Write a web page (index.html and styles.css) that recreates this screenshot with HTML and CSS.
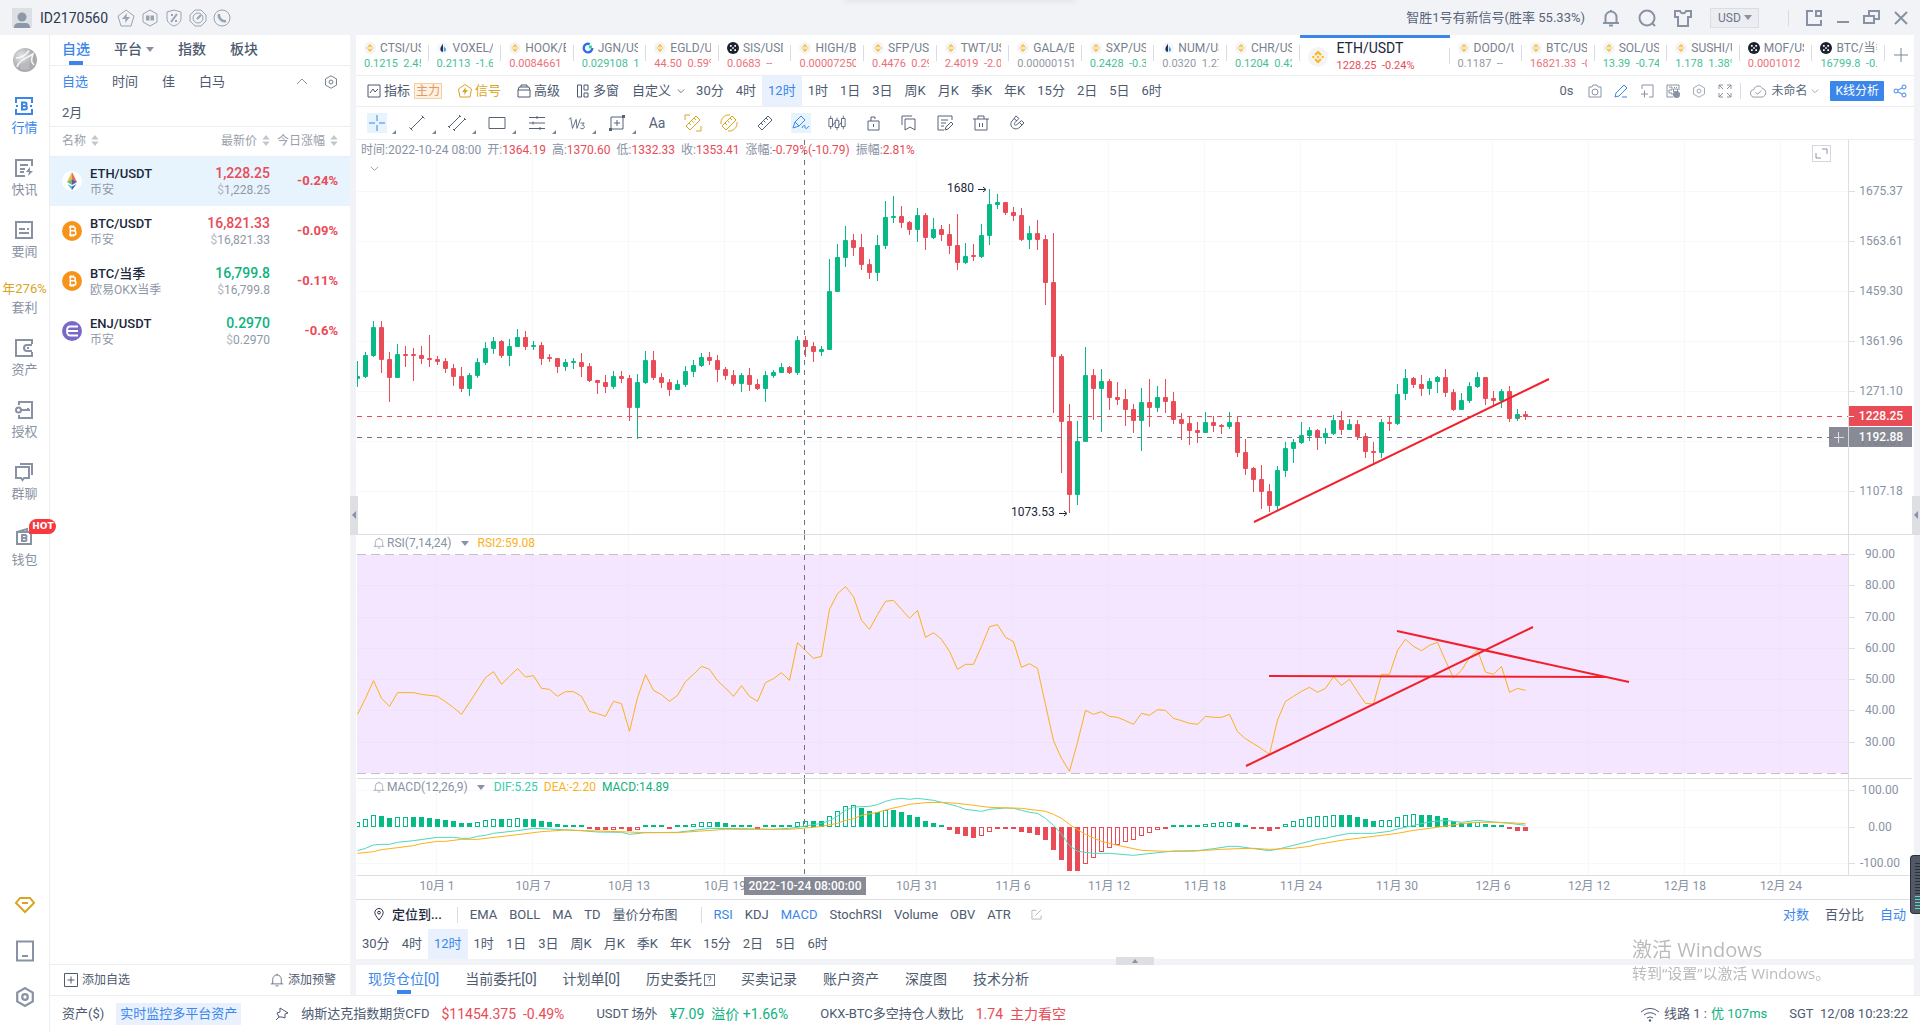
FILE: index.html
```html
<!DOCTYPE html>
<html lang="zh-CN">
<head>
<meta charset="utf-8">
<title>ETH/USDT 行情</title>
<link rel="stylesheet" href="styles.css">
</head>
<body>
<svg class="sprite" aria-hidden="true">
  <symbol id="bell" viewBox="0 0 18 18"><path d="M1 14h16M3.500 14V8a5.500 5.500 0 0 1 11 0v6M7 16.500h4M9 1v2"/></symbol>
  <symbol id="caret" viewBox="0 0 8 5"><path d="M0 0h8L4 5z" fill="currentColor" stroke="none"/></symbol>
  <symbol id="down" viewBox="0 0 10 6"><path d="M1 .5l4 4 4-4"/></symbol>
  <symbol id="sort" viewBox="0 0 8 12"><path d="M4 0l4 5H0zM4 12l4-5H0z" fill="#c3c6cc" stroke="none"/></symbol>
  <symbol id="hex" viewBox="0 0 18 18"><path d="M9 1l7 4v8l-7 4-7-4V5z"/><circle cx="9" cy="9" r="2.500"/></symbol>
  <symbol id="bnb" viewBox="0 0 14 14"><circle cx="7" cy="7" r="7" fill="#f3f4f6" stroke="none"/><path d="M7 2.500l2.600 2.600-1.100 1L7 4.600 5.500 6.100l-1.100-1zM7 11.500L4.400 8.900l1.100-1L7 9.400l1.500-1.500 1.100 1zM2.700 7l1-1 1 1-1 1zM9.300 7l1-1 1 1-1 1zM6 7l1-1 1 1-1 1z" fill="#fdb515" stroke="none"/></symbol>
  <symbol id="drop" viewBox="0 0 14 14"><circle cx="7" cy="7" r="7" fill="#f6f7f9" stroke="none"/><path d="M7 2C4 6 4 7 4 8.500a3 3 0 0 0 3 3z" fill="#1d3350" stroke="none"/><path d="M8 5c2 2 2.500 3 2.500 4A2.500 2.500 0 0 1 8 11.500z" fill="#4a9df0" stroke="none"/></symbol>
  <symbol id="gate" viewBox="0 0 14 14"><path d="M9 2.500A5 5 0 1 0 12 7" stroke="#2d6fe8" stroke-width="2.800"/><path d="M8 4h3.500v3.500H8z" fill="#2ed6a5" stroke="none"/></symbol>
  <symbol id="okx" viewBox="0 0 14 14"><circle cx="7" cy="7" r="7" fill="#1c2230" stroke="none"/><path d="M3.500 3.500h2v2h-2zM8.500 3.500h2v2h-2zM6 6h2v2H6zM3.500 8.500h2v2h-2zM8.500 8.500h2v2h-2z" fill="#fff" stroke="none"/></symbol>
  <symbol id="btc" viewBox="0 0 20 20"><circle cx="10" cy="10" r="10" fill="#f7931a" stroke="none"/><path d="M7 6h4.300c2.700 0 2.700 3.800 0 3.800H8.200h3.500c2.900 0 2.900 4.200 0 4.200H7M8.300 6v8M9 4.200V6M11.300 4.200V6M9 14v1.800M11.300 14v1.800" stroke="#fff" stroke-width="1.500"/></symbol>
  <symbol id="ruler" viewBox="0 0 18 18"><path d="M2 12L12 2l4 4L6 16zM5 9l2 2M7.500 6.500l2 2M10 4l2 2"/></symbol>
</svg>

<div class="app">
<header class="titlebar">
  <svg class="avatar" viewBox="0 0 20 20"><path d="M0 0h20v20H0z" fill="#dcdfe4"/><circle cx="10" cy="9" r="4.500" fill="#8c97a8"/><path d="M2 20c0-4 2-5 5-5h6c3 0 5 1 5 5z" fill="#8c97a8"/></svg>
  <span class="user-id">ID2170560</span>
  <nav class="badges" aria-label="功能">
    <svg viewBox="0 0 18 18"><path d="M9 1l8 6-3 10H4L1 7z"/><path d="M10 4L5 10h3.500L8 14l5-6H9.500z" fill="currentColor" stroke="none"/></svg>
    <svg viewBox="0 0 18 18"><path d="M9 1l7 4v8l-7 4-7-4V5z"/><path d="M5 6.500h3.500v5H5zM9.500 6.500H13v5H9.500z" fill="currentColor" stroke="none"/></svg>
    <svg viewBox="0 0 18 18"><path d="M9 1l7 2v6c0 5-4 7-7 8-3-1-7-3-7-8V3z"/><path d="M12 5l-6 8M6 6h2M10 12h2" stroke-width="2"/></svg>
    <svg viewBox="0 0 18 18"><path d="M6 1h6l5 5v6l-5 5H6l-5-5V6z"/><circle cx="9" cy="9" r="5"/><path d="M8 10l4-4" stroke-width="2"/></svg>
    <svg viewBox="0 0 18 18"><circle cx="9" cy="9" r="8"/><path d="M6 5c-1 4 3 8 7 7" stroke-width="2.500"/></svg>
  </nav>
  <span class="signal-note">智胜1号有新信号(胜率 55.33%)</span>
  <button class="icon-btn" aria-label="通知"><svg class="i18 bold"><use href="#bell"/></svg></button>
  <button class="icon-btn" aria-label="搜索"><svg class="i18 bold" viewBox="0 0 18 18"><circle cx="9" cy="9" r="7.500"/><path d="M14 14l3 3"/></svg></button>
  <button class="icon-btn" aria-label="主题"><svg class="i18 bold" viewBox="0 0 18 18"><path d="M1 2h5c1 3 5 3 6 0h5v6h-3v9H4V8H1z"/></svg></button>
  <label class="currency"><select aria-label="货币"><option>USD</option></select><svg><use href="#caret"/></svg></label>
  <i class="vsep"></i>
  <button class="icon-btn win" aria-label="布局"><svg class="i18 bold" viewBox="0 0 18 18"><path d="M8 2H2v14h14v-5M11 2h5v5h-5z"/></svg></button>
  <button class="icon-btn win" aria-label="最小化"><svg class="i18 bold" viewBox="0 0 18 18"><path d="M3 13h12"/></svg></button>
  <button class="icon-btn win" aria-label="还原"><svg class="i18 bold" viewBox="0 0 18 18"><path d="M1 7h10v7H1zM6 7V2h10v8h-5"/></svg></button>
  <button class="icon-btn win" aria-label="关闭"><svg class="i18 bold" viewBox="0 0 18 18"><path d="M3 3l12 12M15 3L3 15"/></svg></button>
  <i class="top-shade"></i>
</header>

<nav class="rail" aria-label="主导航">
  <svg class="logo" viewBox="0 0 24 24"><defs><radialGradient id="ball" cx=".35" cy=".35"><stop offset="0" stop-color="#e6e6e6"/><stop offset="1" stop-color="#a9abae"/></radialGradient></defs><circle cx="12" cy="12" r="12" fill="url(#ball)"/><path d="M3 10C9 10 13 7 16 2.500M4 19c2-7 8-8 16-13-2 6-2 8 1 11" stroke="#f7f7f7" stroke-width="1.500" fill="none"/><path d="M7 21c1-5 5-7 10-8-1 4-1 6 0 8-3 1-7 1-10 0z" fill="#b9bbbe"/></svg>
  <a class="rail-item on" href="#"><svg class="i18 bold" viewBox="0 0 18 18"><path d="M1 6V1h16v5M1 12v5h16v-5M1 9h2M15 9h2M7 5.500h3c2 0 2 3.500 0 3.500H7h3c2.500 0 2.500 3.500 0 3.500H7z"/></svg>行情</a>
  <a class="rail-item" href="#"><svg class="i18 bold" viewBox="0 0 18 18"><path d="M17 7V1H1v16h9M5 6h8M5 10h5M5 13h4"/><path d="M15 8l-4 5h3l-1 4 5-5h-3z" fill="currentColor" stroke="none"/></svg>快讯</a>
  <a class="rail-item" href="#"><svg class="i18 bold" viewBox="0 0 18 18"><path d="M1 1h16v16H1zM4 8h6M12 8h2M4 12h10"/></svg>要闻</a>
  <a class="rail-item" href="#"><b class="rate">年276%</b>套利</a>
  <a class="rail-item" href="#"><svg class="i18 bold" viewBox="0 0 18 18"><path d="M17 5V1H1v16h16v-4M17 6h-5a3 3 0 0 0 0 6h5M12 9h2"/></svg>资产</a>
  <a class="rail-item" href="#"><svg class="i18 bold" viewBox="0 0 18 18"><path d="M4 4V1h13v16H4v-3M6 9h9M13 7v2"/><circle cx="3.500" cy="9" r="2.500"/></svg>授权</a>
  <a class="rail-item" href="#"><svg class="i18 bold" viewBox="0 0 18 18"><path d="M5 1h12v11M1 4h13v11H9l-1.500 2L6 15H1z"/></svg>群聊</a>
  <a class="rail-item hot" href="#"><svg class="i18 bold" viewBox="0 0 18 18"><path d="M2 5h14v12H2zM2 5l10-3v3M7 8h3c2 0 2 3 0 3H7h3c2 0 2 3 0 3H7z"/></svg>钱包<em>HOT</em></a>
  <div class="rail-foot">
    <a href="#" class="gold" aria-label="会员"><svg class="i20" viewBox="0 0 20 20"><path d="M5 3h10l4 5-9 9-9-9zM7 8h6"/></svg></a>
    <a href="#" aria-label="设备"><svg class="i20" viewBox="0 0 20 20"><path d="M2 0.500h16v19H2zM7 15h6"/></svg></a>
    <a href="#" aria-label="设置"><svg class="i20"><use href="#hex"/></svg></a>
  </div>
</nav>

<aside class="watch">
  <nav class="watch-tabs"><a class="on" href="#">自选</a><a href="#">平台 <svg class="car"><use href="#caret"/></svg></a><a href="#">指数</a><a href="#">板块</a></nav>
  <div class="watch-groups">
    <nav><a class="on" href="#">自选</a><a href="#">时间</a><a href="#">佳</a><a href="#">白马</a><svg class="chev" viewBox="0 0 12 7"><path d="M1 6l5-5 5 5"/></svg><svg class="i14"><use href="#hex"/></svg></nav>
    <a href="#">2月</a>
  </div>
  <table class="quotes">
    <thead><tr><th>名称 <svg><use href="#sort"/></svg></th><th>最新价 <svg><use href="#sort"/></svg></th><th>今日涨幅 <svg><use href="#sort"/></svg></th></tr></thead>
    <tbody>
      <tr class="on"><td><div class="coin"><svg viewBox="0 0 20 20"><circle cx="10" cy="10" r="10" fill="#fff"/><path d="M10 1v7l-5 3z" fill="#f5b553"/><path d="M10 1v7l5 3z" fill="#e8705a"/><path d="M5 11l5-3v6z" fill="#6bbf6a"/><path d="M15 11l-5-3v6z" fill="#6657a8"/><path d="M5.500 13L10 15.500V19z" fill="#4bb3e8"/><path d="M14.500 13L10 15.500V19z" fill="#3468c0"/></svg><span><b>ETH/USDT</b><small>币安</small></span></div></td><td><b class="down">1,228.25</b><small><i>$</i>1,228.25</small></td><td class="down">-0.24%</td></tr>
      <tr><td><div class="coin"><svg><use href="#btc"/></svg><span><b>BTC/USDT</b><small>币安</small></span></div></td><td><b class="down">16,821.33</b><small><i>$</i>16,821.33</small></td><td class="down">-0.09%</td></tr>
      <tr><td><div class="coin"><svg><use href="#btc"/></svg><span><b>BTC/当季</b><small>欧易OKX当季</small></span></div></td><td><b class="up">16,799.8</b><small><i>$</i>16,799.8</small></td><td class="down">-0.11%</td></tr>
      <tr><td><div class="coin"><svg viewBox="0 0 20 20"><circle cx="10" cy="10" r="10" fill="#7a6ac8"/><path d="M16 5.500H8C5 5.500 5 8 5 10s0 4.500 3 4.500h8M5 10h11" stroke="#fff" stroke-width="1.800" fill="none"/></svg><span><b>ENJ/USDT</b><small>币安</small></span></div></td><td><b class="up">0.2970</b><small><i>$</i>0.2970</small></td><td class="down">-0.6%</td></tr>
    </tbody>
  </table>
  <footer><button><svg class="i14" viewBox="0 0 14 14"><path d="M.5.5h13v13H.5zM3.500 7h7M7 3.500v7"/></svg>添加自选</button><button><svg class="i14"><use href="#bell"/></svg>添加预警</button></footer>
</aside>

<main class="main">
  <i class="handle left"></i><i class="handle right"></i>
  <nav class="tickers">
    <a href="#"><span><svg><use href="#bnb"/></svg>CTSI/USDT</span><b class="up">0.1215&nbsp; 2.45%</b></a>
    <a href="#"><span><svg><use href="#drop"/></svg>VOXEL/USDT</span><b class="up">0.2113&nbsp; -1.63%</b></a>
    <a href="#"><span><svg><use href="#bnb"/></svg>HOOK/BTC</span><b class="down">0.0084661</b></a>
    <a href="#"><span><svg><use href="#gate"/></svg>JGN/USDT</span><b class="up">0.029108&nbsp; 1%</b></a>
    <a href="#"><span><svg><use href="#bnb"/></svg>EGLD/USDT</span><b class="down">44.50&nbsp; 0.59%</b></a>
    <a href="#"><span><svg><use href="#okx"/></svg>SIS/USDT</span><b class="down">0.0683&nbsp; --</b></a>
    <a href="#"><span><svg><use href="#bnb"/></svg>HIGH/BTC</span><b class="down">0.00007250</b></a>
    <a href="#"><span><svg><use href="#bnb"/></svg>SFP/USDT</span><b class="down">0.4476&nbsp; 0.29%</b></a>
    <a href="#"><span><svg><use href="#bnb"/></svg>TWT/USDT</span><b class="down">2.4019&nbsp; -2.01%</b></a>
    <a href="#"><span><svg><use href="#bnb"/></svg>GALA/BTC</span><b>0.00000151</b></a>
    <a href="#"><span><svg><use href="#bnb"/></svg>SXP/USDT</span><b class="up">0.2428&nbsp; -0.37%</b></a>
    <a href="#"><span><svg><use href="#drop"/></svg>NUM/USDT</span><b>0.0320&nbsp; 1.27%</b></a>
    <a href="#"><span><svg><use href="#bnb"/></svg>CHR/USDT</span><b class="up">0.1204&nbsp; 0.42%</b></a>
    <a href="#" class="current"><svg><use href="#bnb"/></svg><span>ETH/USDT<b class="down">1228.25&nbsp; -0.24%</b></span></a>
    <a href="#"><span><svg><use href="#bnb"/></svg>DODO/USDT</span><b>0.1187&nbsp; --</b></a>
    <a href="#"><span><svg><use href="#bnb"/></svg>BTC/USDT</span><b class="down">16821.33&nbsp; -0.09%</b></a>
    <a href="#"><span><svg><use href="#bnb"/></svg>SOL/USDT</span><b class="up">13.39&nbsp; -0.74%</b></a>
    <a href="#"><span><svg><use href="#bnb"/></svg>SUSHI/USDT</span><b class="up">1.178&nbsp; 1.38%</b></a>
    <a href="#"><span><svg><use href="#okx"/></svg>MOF/USDT</span><b class="down">0.0001012</b></a>
    <a href="#"><span><svg><use href="#okx"/></svg>BTC/当季</span><b class="up">16799.8&nbsp; -0.11%</b></a>
    <button aria-label="添加"><svg class="i14" viewBox="0 0 14 14"><path d="M7 0v14M0 7h14"/></svg></button>
  </nav>

  <div class="toolbar">
    <button><svg class="i14" viewBox="0 0 14 14"><path d="M1 1h12v12H1zM3 9l3-4 2 3 3-3"/></svg>指标<em>主力</em></button>
    <button class="gold"><svg class="i14" viewBox="0 0 14 14"><path d="M7 .5L13.500 5 12 13H2L.5 5z"/><path d="M8 3L4 8h2.500L6 11l4-5H7.500z" fill="currentColor" stroke="none"/></svg>信号</button>
    <button><svg class="i14" viewBox="0 0 14 14"><path d="M1 6h12v7H1zM1 6l1-3h10l1 3M4 3V1h6v2"/></svg>高级</button>
    <button><svg class="i14" viewBox="0 0 14 14"><path d="M1.500 1h4v12h-4zM8 1h4v5H8zM8 9h4v4H8z"/></svg>多窗</button>
    <button>自定义<svg class="chev8"><use href="#down"/></svg></button>
    <nav class="frames"><a href="#">30分</a><a href="#">4时</a><a class="on" href="#">12时</a><a href="#">1时</a><a href="#">1日</a><a href="#">3日</a><a href="#">周K</a><a href="#">月K</a><a href="#">季K</a><a href="#">年K</a><a href="#">15分</a><a href="#">2日</a><a href="#">5日</a><a href="#">6时</a></nav>
    <div class="tool-right">
      <span>0s</span>
      <svg class="i14" viewBox="0 0 14 14"><path d="M1 3h3l1-2h4l1 2h3v10H1z"/><circle cx="7" cy="8" r="3"/></svg>
      <svg class="i14 blue" viewBox="0 0 14 14"><path d="M1 13l1-4 8-8 3 3-8 8zM8 13h5"/></svg>
      <svg class="i14" viewBox="0 0 14 14"><path d="M2 5V1h11v12H9M1 10h7M4.500 6.500v7"/></svg>
      <svg class="i14" viewBox="0 0 14 14"><path d="M13 6V1H1v12h6M3 3h3v3H3v3h3v2M8 3l1 1M11 3l-1 1M7.500 5h4v3h-4z"/><circle cx="10.500" cy="10.500" r="3.500" fill="currentColor" stroke="none"/></svg>
      <svg class="i14"><use href="#hex"/></svg>
      <svg class="i14" viewBox="0 0 14 14"><path d="M1 5V1h4M1 1l4 4M9 1h4v4M13 1L9 5M1 9v4h4M1 13l4-4M13 9v4H9M13 13L9 9"/></svg>
      <i class="vsep"></i>
      <button class="save"><svg viewBox="0 0 18 14"><path d="M5 13a4 4 0 0 1-1-8c1-5 8-5 9-1 5 0 5 8 0 9zM6 8l2 2 4-4"/></svg>未命名<svg class="chev8"><use href="#down"/></svg></button>
      <button class="primary">K线分析</button>
      <svg class="i14 blue" viewBox="0 0 14 14"><circle cx="3" cy="7" r="2"/><circle cx="11" cy="3" r="2"/><circle cx="11" cy="11" r="2"/><path d="M5 6l4-2M5 8l4 2"/></svg>
    </div>
  </div>

  <div class="draw">
    <button class="more on" aria-label="十字线"><svg viewBox="0 0 18 18"><path d="M9 1v6M9 11v6M1 9h6M11 9h6"/></svg></button>
    <button class="more" aria-label="线段"><svg viewBox="0 0 18 18"><path d="M3 15L15 3M1.500 13.500l3 3M13.500 1.500l3 3"/></svg></button>
    <button class="more" aria-label="平行线"><svg viewBox="0 0 18 18"><path d="M1 13L12 2M6 16L17 5M0 12l2 2M11 1l2 2M5 15l2 2M16 4l2 2"/></svg></button>
    <button class="more" aria-label="矩形"><svg viewBox="0 0 18 18"><path d="M1 3.500h16v11H1z"/></svg></button>
    <button class="more" aria-label="斐波那契"><svg viewBox="0 0 18 18"><path d="M1 3.500h16M1 9h16M1 14.500h16M9 2v3M5 7.500v3M12 13v3"/></svg></button>
    <button class="more" aria-label="波浪"><svg viewBox="0 0 20 18"><path d="M1 5l2-2 2 12 4-10 1 10 4-11M14 9h4l-2 2.500c3 0 3 4-.5 4l-2-1"/></svg></button>
    <button class="more" aria-label="测量"><svg viewBox="0 0 18 18"><path d="M3 3h12v12H3zM9 6v6M6 9h6"/><path d="M1 14h3v3H1zM14 1h3v3h-3z" fill="currentColor" stroke="none"/></svg></button>
    <button class="txt">Aa</button>
    <button class="gold" aria-label="区间统计"><svg viewBox="0 0 18 18"><use href="#ruler" width="18" height="18"/><path d="M1 6V1h5M17 12v5h-5"/></svg></button>
    <button class="gold" aria-label="周期统计"><svg viewBox="0 0 18 18"><use href="#ruler" width="18" height="18"/><path d="M1 10a8 8 0 0 1 9-9M17 8a8 8 0 0 1-9 9"/></svg></button>
    <button aria-label="尺子"><svg viewBox="0 0 18 18"><use href="#ruler" width="18" height="18"/></svg></button>
    <button class="on" aria-label="画笔"><svg viewBox="0 0 18 18"><path d="M1 14L3 8 9 2l4 4-6 6zM3 8l4 4M10 14c2-4 3-3 3-1s2 2 4-1"/></svg></button>
    <button aria-label="K线"><svg viewBox="0 0 20 18"><path d="M1 4h4v9H1zM8 6h4v8H8zM15 4h4v9h-4zM3 1v3M3 13v3M10 3v3M10 14v3M17 1v3M17 13v3M5 12l3-4M12 12l3-4"/></svg></button>
    <button aria-label="锁定"><svg viewBox="0 0 18 18"><path d="M4 7h11v9H4zM7 7V3h4v2M9.500 10v3"/></svg></button>
    <button aria-label="收藏"><svg viewBox="0 0 18 18"><path d="M2 11V2h10M5 5h10v11l-5-3-5 3z"/></svg></button>
    <button aria-label="笔记"><svg viewBox="0 0 18 18"><path d="M16 6V2H2v14h6M5 6h7M5 9h5M5 12h3M9 16l1-3 5-5 2 2-5 5z"/></svg></button>
    <button aria-label="删除"><svg viewBox="0 0 18 18"><path d="M1 5h16M3 5v11h12V5M6 5V2h6v3M7.500 9v4M10.500 9v4"/></svg></button>
    <button aria-label="磁铁"><svg viewBox="0 0 18 18"><path d="M8 2L4 7c-4 5 3 11 8 6l4-4-2.500-2.500-4.500 4c-2 1.500-3.500 0-2-2l4-4zM6 4.500L9 7M11.500 8.500l2.500 2.500"/></svg></button>
  </div>

  <section class="chart">
    <div class="pane price">
      <svg class="plot" id="price"></svg><svg class="axis" id="price-axis"></svg>
      <div class="legend"><span>时间:2022-10-24 08:00</span><span>开:<b class="down">1364.19</b></span><span>高:<b class="down">1370.60</b></span><span>低:<b class="down">1332.33</b></span><span>收:<b class="down">1353.41</b></span><span>涨幅:<b class="down">-0.79%(-10.79)</b></span><span>振幅:<b class="down">2.81%</b></span></div>
      <svg class="fold"><use href="#down"/></svg>
      <button class="expand" aria-label="展开"><svg viewBox="0 0 17 15"><path d="M9 3h5v5M3 7v5h5"/></svg></button>
    </div>
    <div class="pane rsi">
      <svg class="plot" id="rsi"></svg><svg class="axis" id="rsi-axis"></svg>
      <div class="legend sub"><svg><use href="#bell"/></svg>RSI(7,14,24)<svg class="car"><use href="#caret"/></svg><b class="amber">RSI2:59.08</b></div>
    </div>
    <div class="pane macd">
      <svg class="plot" id="macd"></svg><svg class="axis" id="macd-axis"></svg>
      <div class="legend sub"><svg><use href="#bell"/></svg>MACD(12,26,9)<svg class="car"><use href="#caret"/></svg><b class="teal">DIF:5.25</b><b class="amber">DEA:-2.20</b><b class="up">MACD:14.89</b></div>
    </div>
    <svg class="dates" id="dates"></svg>
  </section>

  <div class="indicators">
    <button class="locate"><svg viewBox="0 0 10 14"><path d="M5 13C2 9 .5 7 .5 5a4.500 4.500 0 0 1 9 0c0 2-1.500 4-4.500 8z"/><circle cx="5" cy="5" r="1.500"/></svg>定位到...</button>
    <i class="vsep"></i>
    <nav><a href="#">EMA</a><a href="#">BOLL</a><a href="#">MA</a><a href="#">TD</a><a href="#">量价分布图</a></nav>
    <i class="vsep"></i>
    <nav><a class="on" href="#">RSI</a><a href="#">KDJ</a><a class="on" href="#">MACD</a><a href="#">StochRSI</a><a href="#">Volume</a><a href="#">OBV</a><a href="#">ATR</a></nav>
    <svg class="edit" viewBox="0 0 12 12"><path d="M6 1.500H1v9.500h10V7M5 7l6-6"/></svg>
    <nav class="scale"><a class="on" href="#">对数</a><a href="#">百分比</a><a class="on" href="#">自动</a></nav>
  </div>
  <nav class="frames"><a href="#">30分</a><a href="#">4时</a><a class="on" href="#">12时</a><a href="#">1时</a><a href="#">1日</a><a href="#">3日</a><a href="#">周K</a><a href="#">月K</a><a href="#">季K</a><a href="#">年K</a><a href="#">15分</a><a href="#">2日</a><a href="#">5日</a><a href="#">6时</a></nav>
  <div class="split"><i></i></div>
  <nav class="orders"><a class="on" href="#">现货仓位[0]</a><a href="#">当前委托[0]</a><a href="#">计划单[0]</a><a href="#">历史委托<i>?</i></a><a href="#">买卖记录</a><a href="#">账户资产</a><a href="#">深度图</a><a href="#">技术分析</a></nav>
</main>

<footer class="status">
  <span>资产($)</span><button>实时监控多平台资产</button>
  <svg class="i14 pin" viewBox="0 0 14 14"><path d="M5 1l8 5-3 1 0 4-3-1-3 0-2-4 3-1zM4 10l-3 3"/></svg>
  <span>纳斯达克指数期货CFD</span><b class="down quote">$11454.375&nbsp; -0.49%</b>
  <span class="next">USDT 场外</span><b class="up quote">¥7.09&nbsp; 溢价 +1.66%</b>
  <span class="next">OKX-BTC多空持仓人数比</span><b class="down quote">1.74&nbsp; 主力看空</b>
  <span class="line"><svg viewBox="0 0 20 15"><path d="M1 5a13 13 0 0 1 18 0M4 8a9 9 0 0 1 12 0M7 11a5 5 0 0 1 6 0"/><circle cx="10" cy="13.500" r="1.200" fill="currentColor" stroke="none"/></svg>线路 1 : <b class="up">优 107ms</b></span>
  <time>SGT&nbsp; 12/08 10:23:22</time>
</footer>
</div>

<div class="watermark"><p>激活 Windows</p><small>转到“设置”以激活 Windows。</small></div>
<i class="meter"></i>
<script src="charts.js"></script>
</body>
</html>
```
FILE: styles.css
```css
* { box-sizing: border-box; }
body { margin: 0; background: #f2f3f7; color: #4d5a70; font: 13px/18px Roboto, "Noto Sans CJK SC", sans-serif; }
a { color: inherit; text-decoration: none; }
b, em, i { font-weight: 400; font-style: normal; }
button { border: 0; padding: 0; background: none; color: inherit; font: inherit; display: flex; align-items: center; }
svg { fill: none; stroke: currentColor; flex: none; overflow: visible; display: block; }
nav { display: flex; }
.sprite { position: absolute; width: 0; height: 0; }
.i14 { width: 14px; height: 14px; }
.i18 { width: 18px; height: 18px; }
.i20 { width: 20px; height: 20px; stroke-width: 2; }
.bold { stroke-width: 2; }
.car { width: 8px; height: 5px; color: #8892a4; }
.chev { width: 12px; height: 7px; color: #8892a4; }
.chev8 { width: 8px; height: 5px; }
.up { color: #0eb27e; }
.down { color: #e94b57; }
.amber { color: #fdb01a; }
.teal { color: #35cdb0; }
.gold { color: #d9a520; }
.blue { color: #3b86ea; }
.vsep { width: 1px; height: 16px; background: #d9dce2; flex: none; }

.app { display: grid; grid-template-columns: 50px 300px minmax(0, 1fr); grid-template-rows: 35px minmax(0, 1fr) 37px; min-height: 100vh; }

.titlebar { grid-column: 1 / -1; display: flex; align-items: center; padding: 0 10px 0 12px; position: relative; color: #8892a4; }
.avatar { width: 20px; height: 20px; stroke: none; }
.user-id { margin-left: 8px; color: #2c384e; font-size: 14px; }
.badges { gap: 6px; margin-left: 9px; flex: 1; color: #9aa3b2; }
.badges svg { width: 18px; height: 18px; }
.signal-note { color: #5a657a; margin-right: 17px; }
.icon-btn { margin-right: 18px; }
.icon-btn.win { margin: 0 0 0 11px; }
.currency { display: flex; align-items: center; position: relative; margin-right: 29px; }
.currency select { appearance: none; width: 49px; height: 20px; padding: 0 7px; border: 1px solid #dadde3; background: #ebedf1; color: #6b778c; font: 12px/18px Roboto, sans-serif; border-radius: 0; }
.currency svg { position: absolute; right: 7px; width: 8px; height: 5px; }
.titlebar > .icon-btn.win:nth-of-type(4) { margin-left: 16px; }
.top-shade { position: absolute; top: -4px; left: 44%; width: 230px; height: 4px; box-shadow: 0 0 6px #d3d5da; }

.rail { grid-row: 2 / 4; background: #fff; border-right: 1px solid #eceef1; display: flex; flex-direction: column; align-items: center; color: #8892a4; padding-top: 13px; }
.logo { width: 24px; height: 24px; stroke: none; margin-bottom: 25px; }
.rail-item { display: flex; flex-direction: column; align-items: center; gap: 4px; padding-bottom: 22px; position: relative; white-space: nowrap; }
.rail-item.on { color: #3b86ea; }
.rate { color: #d9a520; line-height: 12px; }
.rail-item.hot { margin-top: 2px; gap: 6px; }
.hot em { position: absolute; left: 18px; top: -8px; width: 27px; height: 15px; border-radius: 8px 8px 8px 0; background: #f5393f; color: #fff; font: bold 9px/15px "DejaVu Sans", sans-serif; text-align: center; }
.rail-foot { margin-top: auto; display: flex; flex-direction: column; gap: 26px; padding-bottom: 25px; }

.watch { background: #fff; display: flex; flex-direction: column; }
.watch-tabs { height: 31px; padding: 0 12px; gap: 24px; border-bottom: 1px solid #eceef1; font-size: 14px; font-weight: 500; line-height: 28px; }
.watch-tabs a { display: flex; align-items: center; gap: 4px; position: relative; height: 28px; }
.watch-tabs .on::after, .orders .on::after { content: ""; position: absolute; left: 50%; bottom: -2px; margin-left: -7px; width: 14px; height: 4px; background: #3b86ea; }
.on { color: #3b86ea; }
.watch-groups { padding: 0 12px; height: 61px; line-height: 31px; border-bottom: 1px solid #eceef1; }
.watch-groups nav { gap: 24px; align-items: center; height: 31px; }
.watch-groups .chev { margin-left: auto; margin-right: -8px; }
.quotes { width: 100%; border-collapse: collapse; table-layout: fixed; }
.quotes th { height: 29px; padding: 0; font: 12px/18px Roboto, "Noto Sans CJK SC", sans-serif; color: #9aa0ab; text-align: right; white-space: nowrap; border-bottom: 1px solid #eceef1; }
.quotes th:first-child { text-align: left; padding-left: 12px; width: 140px; }
.quotes th:nth-child(2) { width: 80px; }
.quotes th svg { display: inline-block; width: 8px; height: 11px; vertical-align: -1px; margin-left: 2px; }
.quotes th:last-child, .quotes td:last-child { padding-right: 12px; }
.quotes td { height: 50px; padding: 0; text-align: right; font-weight: 700; }
.quotes tr.on { background: #e7f4fd; color: inherit; }
.quotes b { display: block; font-size: 14px; line-height: 17px; font-weight: 500; }
.quotes small { display: block; font-size: 12px; line-height: 16px; font-weight: 400; color: #8f98a8; }
.quotes small i { color: #b5bac4; }
.coin { display: flex; align-items: center; gap: 8px; padding-left: 12px; text-align: left; white-space: nowrap; }
.coin svg { width: 20px; height: 20px; stroke: none; }
.coin b { font-size: 13px; color: #1c273b; }
.watch footer { margin-top: auto; height: 31px; border-top: 1px solid #eceef1; display: flex; justify-content: space-between; padding: 0 14px; font-size: 12px; }
.watch footer button { gap: 4px; }

.main { margin: 0 6px; display: flex; flex-direction: column; background: #fff; position: relative; min-width: 0; }
.handle { position: absolute; top: 461px; width: 8px; height: 39px; background: #dddfe3; z-index: 2; }
.handle.left { left: -6px; }
.handle.right { right: -6px; }
.handle::after { content: ""; position: absolute; left: 2px; top: 15px; border: 4px solid transparent; border-right-color: #8892a4; border-left: 0; }

.tickers { height: 41px; border-bottom: 1px solid #eceef1; }
.tickers a { flex: 1 1 0; min-width: 0; padding: 5px 8px 0; position: relative; font-size: 12px; color: #78818f; white-space: nowrap; }
.tickers a::after { content: ""; position: absolute; right: 0; top: 10px; width: 1px; height: 16px; background: #d9dce2; }
.tickers span, .tickers b { display: block; overflow: hidden; line-height: 16px; }
.tickers span { display: flex; gap: 4px; }
.tickers span svg { width: 12px; height: 12px; margin-top: 2px; }
.tickers b { font-size: 11px; opacity: .8; }
.tickers .current { flex: 0 0 150px; display: flex; align-items: center; gap: 9px; padding: 0 8px; border-top: 3px solid #3b86ea; }
.tickers .current > svg { width: 20px; height: 20px; }
.tickers .current span { display: block; font-size: 14px; line-height: 18px; color: #1c273b; }
.tickers .current b { opacity: 1; line-height: 18px; }
.tickers button { width: 29px; justify-content: center; padding-left: 4px; color: #7c8697; }

.toolbar { height: 31px; border-bottom: 1px solid #eceef1; display: flex; align-items: center; padding: 0 7px 0 11px; }
.toolbar > button { gap: 3px; margin-right: 16px; white-space: nowrap; }
.toolbar > button:nth-child(4) { margin-right: 13px; }
.toolbar > button:nth-child(5) { margin-right: 5px; gap: 6px; }
.toolbar em { margin-left: 1px; padding: 0 1px; border: 1px solid #f3cfa8; background: #fdf1e2; color: #dd9a62; font-size: 12px; line-height: 14px; }
.frames { height: 30px; align-items: stretch; line-height: 30px; white-space: nowrap; }
.frames a { padding: 0 6px; }
.frames .on { background: #e8f1fd; }
.tool-right { margin-left: auto; display: flex; align-items: center; gap: 12px; color: #8892a4; }
.tool-right span { color: #5a657a; margin-right: 3px; }
.tool-right .vsep { margin-left: -4px; margin-right: -3px; }
.tool-right .blue { color: #3b86ea; }
.save { gap: 4px; font-size: 12px; white-space: nowrap; color: #5a657a; }
.save svg { color: #8892a4; }
.save svg:first-child { width: 17px; height: 13px; }
.primary { height: 20px; padding: 0 5px; background: #3b86ea; color: #fff; font-size: 12px; border-radius: 1px; margin: 0 -3px 0 -1px; white-space: nowrap; }

.draw { height: 33px; border-bottom: 1px solid #eceef1; display: flex; align-items: center; gap: 16px; padding-left: 11px; color: #56627a; }
.draw button { width: 20px; height: 20px; justify-content: center; position: relative; }
.draw svg { width: 18px; height: 18px; }
.draw .more { margin-right: 4px; }
.draw .more::after { content: ""; position: absolute; right: -9px; bottom: -1px; border: 2px solid #7c8697; border-top-color: transparent; border-left-color: transparent; }
.draw .on { background: #e7f4fd; color: #3b86ea; }
.draw .gold { color: #d9a520; }
.draw .txt { font-size: 14px; }

.chart { flex: 1; display: flex; flex-direction: column; padding: 0 2px 0 1px; border-bottom: 1px solid #dcdee2; }
.pane { display: flex; position: relative; border-bottom: 1px solid #dcdee2; font-size: 12px; min-height: 0; }
.price { flex: 1 0 395px; }
.rsi { flex: 0 0 244px; }
.macd { flex: 0 0 97px; }
.plot { flex: 1 1 0; min-width: 0; height: 100%; overflow: hidden; }
.axis { width: 64px; height: 100%; border-left: 1px solid #dcdee2; }
.dates { width: 100%; height: 23px; font-size: 12px; overflow: hidden; }
.chart text { stroke: none; fill: #8892a4; font-size: 12px; }
.chart text.dark { fill: #1c273b; }
.chart text.light { fill: #fff; font-weight: 500; }
.legend { position: absolute; left: 4px; top: 2px; display: flex; gap: 6px; color: #8892a4; line-height: 16px; white-space: nowrap; }
.legend.sub { left: 16px; top: 0; align-items: center; }
.legend.sub svg:first-child { width: 12px; height: 12px; margin-right: -4px; }
.legend.sub .car { margin: 0 3px; }
.fold { position: absolute; left: 13px; top: 26px; width: 9px; height: 6px; color: #8892a4; }
.expand { position: absolute; right: 81px; top: 5px; width: 19px; height: 17px; border: 1px solid #d4d7dd; color: #8892a4; }
.expand svg { width: 17px; height: 15px; }

.indicators { height: 29px; display: flex; align-items: center; gap: 12px; padding: 0 8px 0 18px; white-space: nowrap; }
.indicators nav { gap: 12px; }
.locate { gap: 8px; color: #1c273b; font-weight: 500; margin-right: 3px; }
.locate svg { width: 10px; height: 13px; }
.indicators nav + .vsep { margin-left: 11px; }
.edit { width: 11px; height: 11px; color: #b0b6c1; margin-left: 8px; }
.indicators .scale { margin-left: auto; gap: 16px; }
.split { height: 6px; background: #f2f3f7; position: relative; }
.split i { position: absolute; left: 760px; top: -2px; width: 38px; height: 8px; background: #dddfe3; }
.split i::after { content: ""; position: absolute; left: 16px; top: 2px; border: 3px solid transparent; border-bottom: 4px solid #8892a4; border-top: 0; }
.orders { height: 30px; gap: 26px; padding-left: 12px; font-size: 14px; line-height: 28px; white-space: nowrap; }
.orders a { position: relative; height: 27px; }
.orders i { display: inline-block; width: 11px; height: 12px; margin-left: 2px; border: 1px solid #6b778c; font-size: 9px; line-height: 10px; text-align: center; vertical-align: 1px; }

.status { grid-column: 2 / -1; background: #fff; border-top: 1px solid #eceef1; display: flex; align-items: center; padding: 0 12px; white-space: nowrap; }
.status button { margin-left: 12px; height: 22px; padding: 0 4px; background: #e8f1fd; color: #3b86ea; }
.pin { margin: 0 12px 0 34px; }
.quote { margin-left: 12px; font-size: 14px; }
.next { margin-left: 32px; }
.line { margin-left: auto; display: flex; align-items: center; gap: 4px; }
.line svg { width: 20px; height: 15px; }
.status time { margin-left: 22px; }

.watermark { position: fixed; left: 85%; bottom: 49px; color: rgba(120, 120, 120, .5); font-family: "Open Sans", "Noto Sans CJK SC", sans-serif; pointer-events: none; white-space: nowrap; }
.watermark p { margin: 0; font-size: 20px; line-height: 26px; }
.watermark small { font-size: 15px; line-height: 20px; }
.meter { position: fixed; right: 0; top: 855px; width: 10px; height: 59px; background: repeating-linear-gradient(#2b3040 0 1px, transparent 1px 3px) 4px 7px / 5px 32px no-repeat, repeating-linear-gradient(#4fe0c0 0 1px, transparent 1px 3px) 4px 40px / 5px 13px no-repeat, #525866; border: 1px solid #2b3040; border-right: 0; border-radius: 4px 0 0 4px; z-index: 3; }
```
FILE: charts.js
```js
// Each candle: direction, body top, body bottom, high, low (in thirds of a pixel).
const candles = `G 618 627 573 651|G 555 621 546 624|G 471 558 453 561|R 471 570 453 608|R 567 624 546 695|G 552 624 522 625|R 552 558 528 591|R 552 558 535 633|R 555 567 528 581|R 564 570 495 591
R 567 576 558 585|R 573 597 564 609|R 594 621 583 647|R 618 657 591 665|G 615 657 610 678|G 576 618 564 624|G 534 579 516 585|G 513 537 501 551|R 513 558 510 563|G 528 558 507 587
G 501 531 477 531|R 501 531 483 540|G 525 531 513 540|R 525 567 517 585|R 561 567 552 576|R 564 591 564 609|G 576 591 567 603|G 573 579 564 597|R 576 591 550 621|R 588 633 580 635
R 630 639 630 672|R 636 651 616 668|G 618 651 602 657|R 618 627 603 639|R 624 714 615 753|G 636 714 612 806|G 570 639 543 642|R 570 624 543 630|R 621 639 610 654|R 636 660 627 677
G 642 660 630 660|G 603 645 588 650|G 585 606 570 621|G 561 588 549 591|R 561 573 545 585|R 570 600 555 636|R 597 618 591 629|R 615 642 600 648|G 615 642 609 666|R 615 645 595 662
R 642 657 627 660|G 615 657 602 696|G 606 618 600 624|G 591 609 580 609|R 591 609 588 612|G 510 609 498 615|R 510 531 499 561|R 528 546 516 576|G 537 546 528 557|G 363 540 267 540
G 261 366 223 366|G 210 264 168 291|R 210 234 192 258|R 231 285 192 299|R 282 309 267 326|G 225 309 196 333|G 141 228 93 236|G 138 144 78 158|R 138 159 108 174|R 156 180 152 195
G 135 180 114 216|R 135 204 128 239|G 177 204 145 207|R 177 195 165 213|R 192 228 162 251|R 225 279 132 300|G 258 279 219 281|R 255 261 222 272|G 195 261 162 264|G 102 198 57 224
G 96 105 72 117|R 96 129 96 134|R 126 138 111 152|R 135 210 114 213|G 189 210 168 237|R 189 210 151 240|R 207 339 195 405|R 336 561 189 729|R 558 756 552 908|R 753 975 702 1030
G 813 975 753 1005|G 615 816 532 816|R 615 657 597 750|G 633 657 597 786|R 633 684 627 719|R 681 690 637 705|R 687 720 657 768|R 717 753 702 788|G 696 753 654 842|R 696 714 628 770
G 681 714 648 725|R 681 696 628 729|R 693 750 666 762|R 747 762 729 811|R 759 783 738 824|R 780 789 756 818|G 756 789 727 789|R 756 768 738 787|R 765 771 762 792|G 756 771 726 777
R 756 849 740 860|R 846 897 807 914|R 894 930 890 966|R 927 966 886 1017|R 963 1008 942 1026|G 900 1008 888 1020|G 834 903 816 922|G 816 837 807 879|G 795 819 756 823|G 780 798 772 813
R 780 804 778 841|G 789 804 774 821|G 750 792 736 795|R 750 780 723 795|G 762 780 748 780|R 762 801 751 809|R 798 846 790 865|R 843 849 816 880|G 756 849 747 864|R 756 762 739 783
G 672 762 642 764|G 624 672 597 690|R 624 645 621 654|R 642 657 615 678|G 633 657 624 675|G 621 636 618 669|R 621 669 598 680|R 666 720 657 723|G 690 720 669 720|G 648 693 636 699
G 621 651 606 654|R 621 687 621 705|R 684 693 664 711|G 663 693 657 714|R 663 747 649 756|G 732 747 717 753|R 732 741 722 750`.split(/[|\n]/).map(r => r.split(' '));

const rsi = [553,505,452,505,529,488,488,488,493,496,499,515,533,553,517,480,443,425,463,439,416,441,437,475,478,499,485,485,499,544,551,559,514,521,604,503,434,481,494,514,496,455,433,409,418,452,474,499,467,499,514,458,446,428,451,338,
362,385,379,238,191,170,200,271,298,254,214,211,238,265,241,322,308,328,364,418,403,403,349,290,284,322,335,412,401,415,524,632,685,724,637,541,553,545,559,562,572,583,550,556,539,541,565,572,580,583,559,562,562,553,
605,626,641,656,673,570,514,499,484,472,487,475,440,466,448,485,520,522,433,433,361,328,349,362,346,337,392,444,421,383,361,426,433,409,487,475,481];

// Histogram heights in pixels; "h" marks a hollow bar.
const bars = `5h 8h 12h 11 9 10h 10h 10 10 9 8 7 6 4 4 5h 7h 8h 8 8h 9h 8 8 6 5 3 2 2 2 -2 -3 -3 -3h -2 -4 -3h 2 2 2 -2 2 2 3h 5h 5h 5 4 2 2 2 -2 2 2 2 2 5h 6h 6 6 11h 16h 21h 22h 19 16 15 17h 17 15 12 10 6 4 2 -3 -7 -9 -11 -9h -5h -2 -2 -2 -5 -6 -8 -13 -23 -33 -44 -44 -37h -31h -25h -21h -18h -15h -13h -9h -6h -3h -2 2 2 2 2 3h 4h 5h 5h 4 2 -2 -2 -4 -2 3h 6h 8h 10h 11h 11h 12h 12 12 10 8 6 7h 7h 10h 12h 13h 12 12 11 9 6 4 4 5h 3 2 2 -2 -4 -4`.split(' ');

const dif = '0:962 1:955 2:945 3:943 4:943 5:937 7:932 10:922 12:922 13:925 14:925 15:919 16:916 17:910 20:902 22:895 24:897 28:902 30:906 33:907 34:913 36:908 40:907 44:895 48:896 52:898 54:895 55:892 56:888 57:884 58:880 59:872 60:858 61:841 62:831 64:829 65:824 66:814 67:808 68:805 69:808 70:805 72:811 74:823 75:829 76:838 78:844 79:838 81:834 82:835 83:841 84:847 85:850 86:865 87:886 88:912 89:947 90:964 92:970 94:970 97:976 100:968 102:963 105:962 107:956 109:949 110:949 112:956 114:962 115:958 116:952 118:940 120:928 121:925 122:919 124:910 127:910 129:904 130:897 132:886 134:876 136:871 138:877 140:871 142:876 144:880 146:886';
const dea = '0:970 2:965 3:959 5:953 7:947 8:941 10:934 11:934 13:928 15:928 20:914 23:905 26:900 30:903 34:906 36:908 40:908 46:898 54:898 57:892 58:889 60:880 61:871 62:866 63:856 65:847 67:834 68:829 69:823 71:818 73:817 75:820 77:826 79:832 83:835 86:844 87:853 88:865 89:883 90:899 91:913 93:934 95:946 98:961 101:964 104:964 106:961 108:958 110:956 112:955 114:958 117:955 119:949 120:943 123:931 127:919 130:910 132:901 134:895 136:888 138:881 140:877 142:877 144:878 146:881';

const GREEN = '#06b985', RED = '#e94b57', STEP = 8;
const line = (x1, y1, x2, y2, stroke, extra = '') => `<line x1="${x1}" y1="${y1}" x2="${x2}" y2="${y2}" stroke="${stroke}" ${extra}/>`;
const rect = (x, y, w, h, fill, extra = '') => `<rect x="${x}" y="${y}" width="${w}" height="${h}" fill="${fill}" stroke="none" ${extra}/>`;
const text = (x, y, s, cls = '', anchor = 'middle') => `<text x="${x}" y="${y}" class="${cls}" text-anchor="${anchor}">${s}</text>`;
const put = (id, html) => { document.getElementById(id).innerHTML = html; };
const grid = (rows, color, from = 0, to = '100%') => rows.map(y => line(0, y + .5, '100%', y + .5, color)).join('')
  + Array.from({ length: 15 }, (_, i) => line(79.5 + i * 96, from, 79.5 + i * 96, to, color)).join('');
const cursor = line(447.5, 0, 447.5, '100%', '#6b7785', 'stroke-dasharray="5 5"');
const trend = (x1, y1, x2, y2) => line(x1, y1, x2, y2, '#f3202c', 'stroke-width="2"');

const py = v => Math.round(30 + v / 3);
let s = grid([51, 101, 151, 201, 251, 301, 351], '#f6f8f9');
candles.forEach(([d, top, bottom, high, low], k) => {
  const c = d === 'G' ? GREEN : RED;
  s += rect(k * STEP, py(high), 1, py(low) - py(high), c) + rect(k * STEP - 2, py(top), 5, Math.max(2, py(bottom) - py(top)), c, 'rx="1"');
});
s += line(0, 276.5, '100%', 276.5, RED, 'stroke-dasharray="5 5"') + line(0, 297.5, '100%', 297.5, '#6b7785', 'stroke-dasharray="5 5"') + cursor;
s += trend(897, 382, 1192, 239);
s += text(590, 52, '1680', 'dark', 'start') + '<path d="M621 49.500h7M626 47l3 2.500-3 2.500" stroke="#1c273b"/>';
s += text(654, 376, '1073.53', 'dark', 'start') + '<path d="M702 373.500h7M707 371l3 2.500-3 2.500" stroke="#1c273b"/>';
put('price', s);

const ticks = (rows, x) => rows.map(([y, t]) => line(0, y + .5, 6, y + .5, '#dcdee2') + text(x, y + 4, t)).join('');
put('price-axis', ticks([[51, '1675.37'], [101, '1563.61'], [151, '1459.30'], [201, '1361.96'], [251, '1271.10'], [301, '1186.51'], [351, '1107.18']], 32)
  + rect(0, 266, 63, 20, RED) + line(0, 276.5, 5, 276.5, '#fff') + text(32, 280, '1228.25', 'light')
  + rect(-20, 287, 83, 20, '#777a86', 'fill-opacity=".88"') + line(-.5, 287, -.5, 307, '#d4d7dd') + line(-15, 297.5, -5, 297.5, '#dfe1e6') + line(-10.5, 292, -10.5, 303, '#dfe1e6')
  + text(32, 301, '1192.88', 'light'));

const ry = v => v / 3 - 5;
s = grid([], '#f6f8f9') + rect(0, 20, '100%', 218, '#f4e6fe') + grid([50, 82, 113, 144, 175, 207], '#efe2fb', 20, 238);
s += line(0, 19.5, '100%', 19.5, '#c5bfcc', 'stroke-dasharray="9 5"') + line(0, 238.5, '100%', 238.5, '#c5bfcc', 'stroke-dasharray="9 5"');
s += `<polyline points="${rsi.map((v, k) => (k * STEP + .5) + ',' + ry(v)).join(' ')}" stroke="#fdb01a"/>`;
s += cursor + trend(889, 231, 1176, 92) + trend(1040, 96, 1272, 147) + trend(912, 141, 1249, 142);
put('rsi', s);
put('rsi-axis', ticks([[19, '90.00'], [50, '80.00'], [82, '70.00'], [113, '60.00'], [144, '50.00'], [175, '40.00'], [207, '30.00']], 31));

s = grid([11, 48, 84], '#f6f8f9');
bars.forEach((b, k) => {
  const v = parseInt(b, 10), c = v > 0 ? GREEN : RED, h = Math.abs(v), y = v > 0 ? 48 - h : 48;
  s += b.endsWith('h') ? `<rect x="${k * STEP - 1.5}" y="${y + .5}" width="4" height="${h - 1}" fill="#fff" stroke="${c}"/>` : rect(k * STEP - 2, y, 5, h, c);
});
const curve = (src, color) => `<polyline points="${src.split(' ').map(p => p.split(':')).map(([k, v]) => (k * STEP + .5) + ',' + (v / 3 - 249)).join(' ')}" stroke="${color}"/>`;
put('macd', s + curve(dif, '#4fd6be') + curve(dea, '#fdb01a') + cursor);
put('macd-axis', ticks([[11, '100.00'], [48, '0.00'], [84, '-100.00']], 31));

const dates = ['10月 1', '10月 7', '10月 13', '10月 19', '10月 25', '10月 31', '11月 6', '11月 12', '11月 18', '11月 24', '11月 30', '12月 6', '12月 12', '12月 18', '12月 24'];
put('dates', dates.map((d, i) => text(80 + i * 96, 14, d)).join('') + rect(387, 1, 122, 18, '#777a86', 'fill-opacity=".88"') + text(448, 14, '2022-10-24 08:00:00', 'light'));
```
